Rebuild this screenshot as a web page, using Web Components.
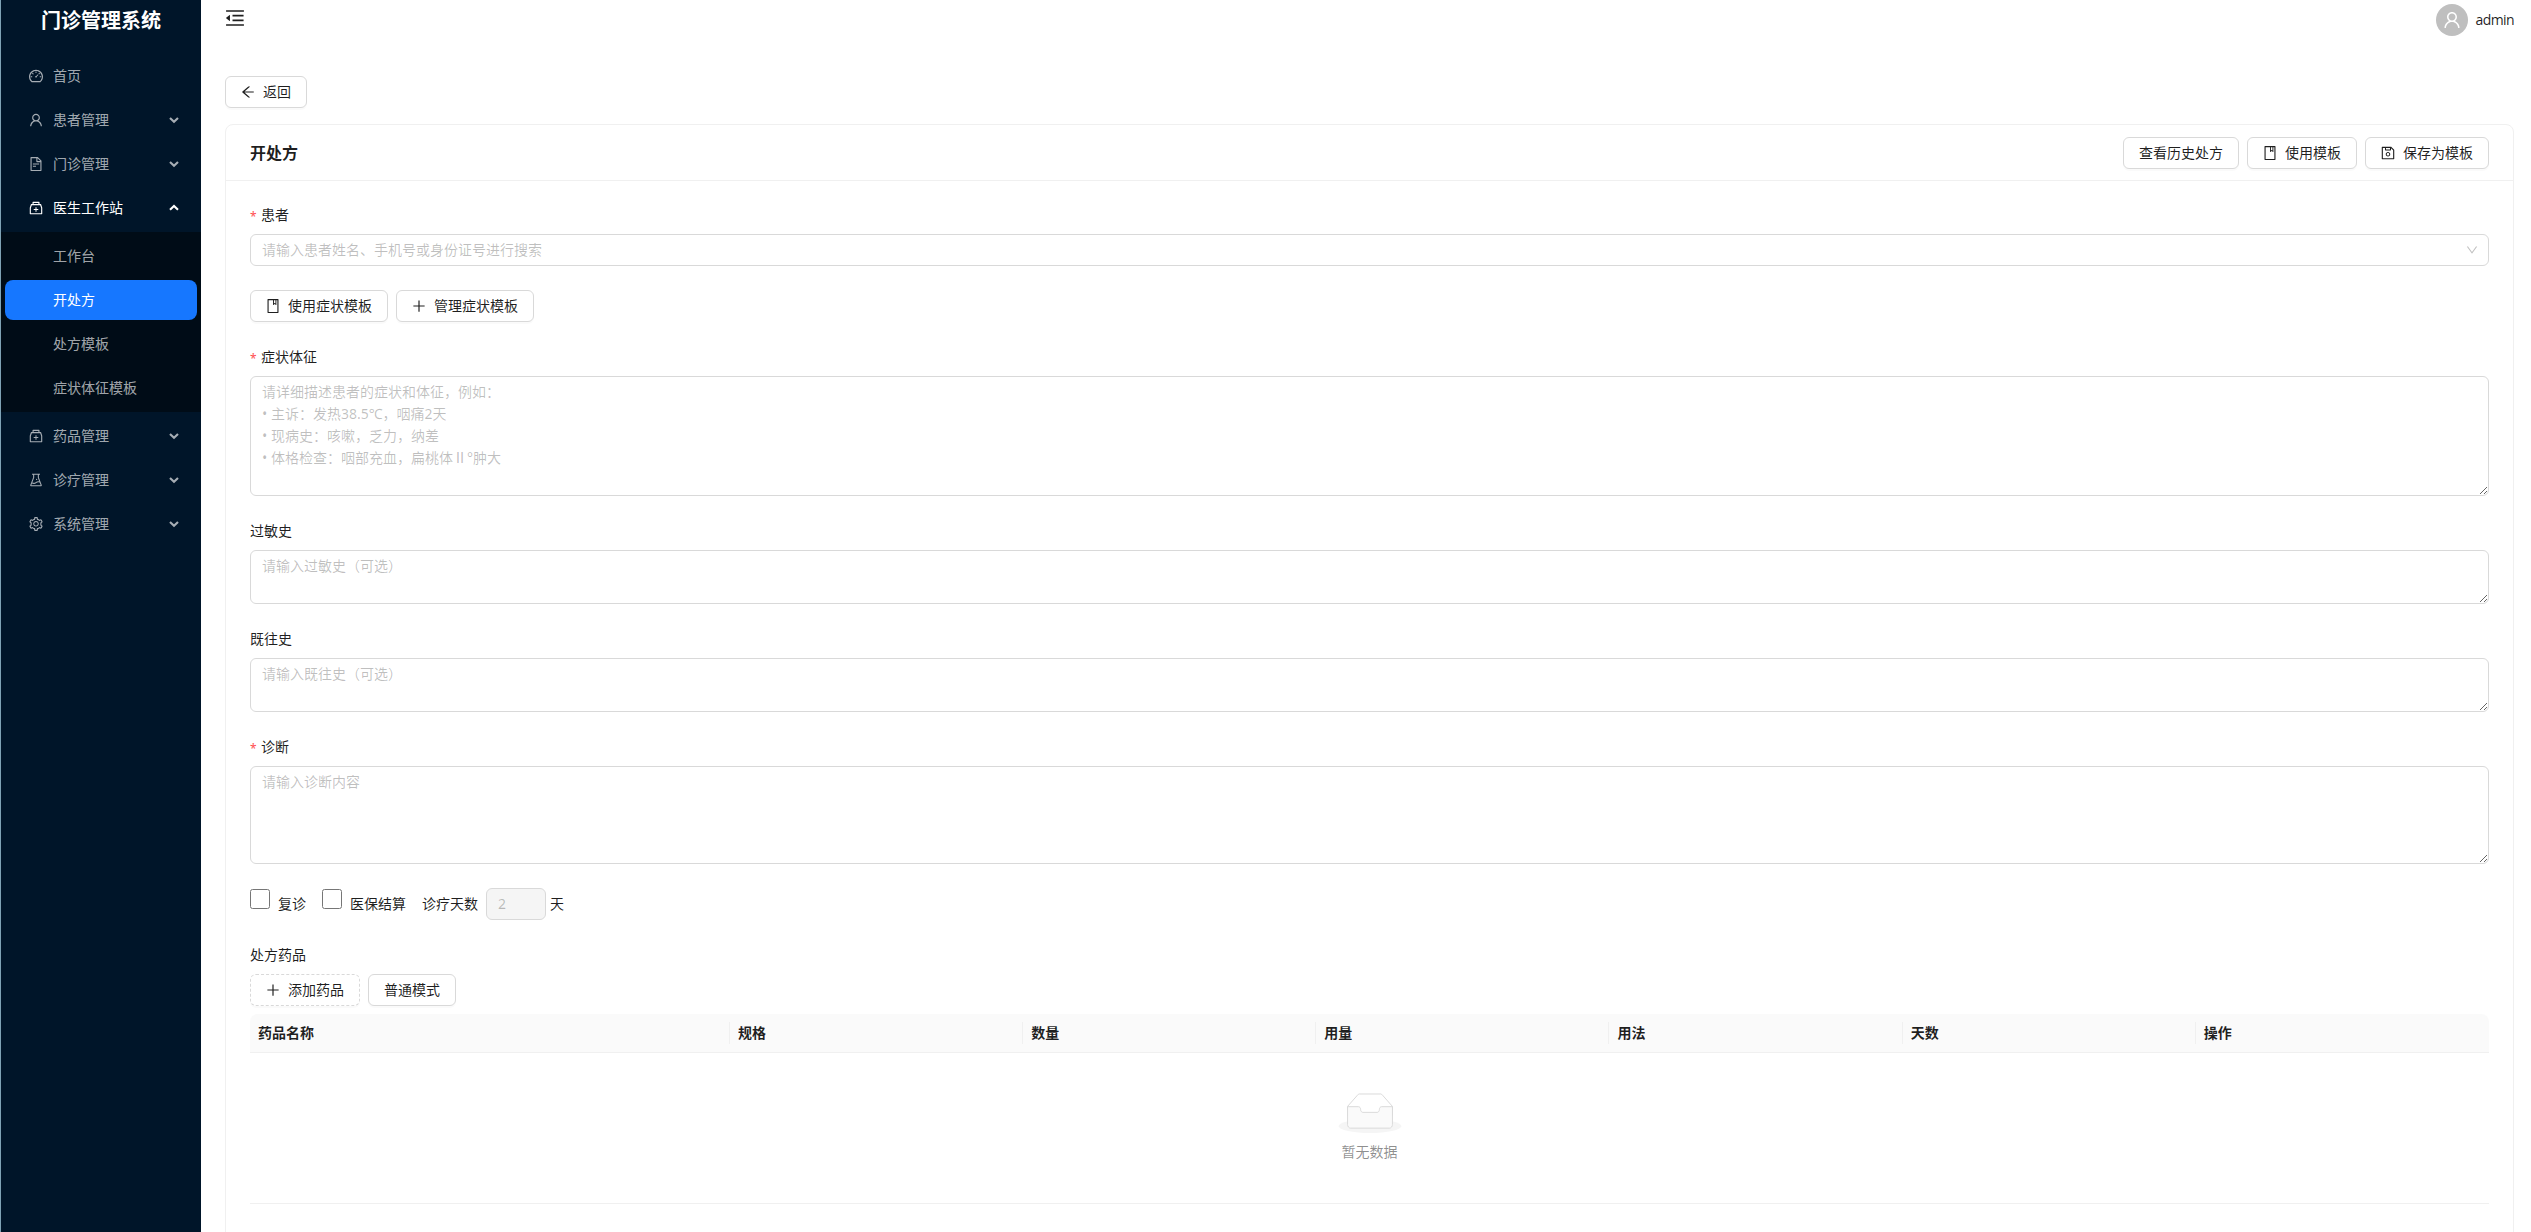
<!DOCTYPE html>
<html lang="zh-CN">
<head>
<meta charset="UTF-8">
<title>门诊管理系统</title>
<style>
    html, body {
        height: 100%;
        margin: 0;
        overflow: hidden;
    }

    body {
        background: #fff;
        color: rgba(0, 0, 0, 0.88);
        font: 14px/22px "Noto Sans", "Noto Sans CJK SC", sans-serif;
    }
</style>
</head>
<body>
<clinic-layout>
    <clinic-sidebar slot="sider" heading="门诊管理系统">
        <clinic-menu-item icon="dashboard">首页</clinic-menu-item>
        <clinic-menu-item icon="user" arrow="down">患者管理</clinic-menu-item>
        <clinic-menu-item icon="file" arrow="down">门诊管理</clinic-menu-item>
        <clinic-menu-item icon="medicine" arrow="up" open>医生工作站</clinic-menu-item>
        <clinic-submenu>
            <clinic-menu-item>工作台</clinic-menu-item>
            <clinic-menu-item selected>开处方</clinic-menu-item>
            <clinic-menu-item>处方模板</clinic-menu-item>
            <clinic-menu-item>症状体征模板</clinic-menu-item>
        </clinic-submenu>
        <clinic-menu-item icon="medicine" arrow="down">药品管理</clinic-menu-item>
        <clinic-menu-item icon="experiment" arrow="down">诊疗管理</clinic-menu-item>
        <clinic-menu-item icon="setting" arrow="down">系统管理</clinic-menu-item>
    </clinic-sidebar>

    <clinic-header slot="header">admin</clinic-header>

    <clinic-button icon="back">返回</clinic-button>

    <clinic-card heading="开处方">
        <clinic-button slot="extra">查看历史处方</clinic-button>
        <clinic-button slot="extra" icon="book">使用模板</clinic-button>
        <clinic-button slot="extra" icon="save">保存为模板</clinic-button>

        <clinic-field label="患者" required>
            <clinic-select>请输入患者姓名、手机号或身份证号进行搜索</clinic-select>
        </clinic-field>
        <clinic-row>
            <clinic-button icon="book">使用症状模板</clinic-button>
            <clinic-button icon="plus">管理症状模板</clinic-button>
        </clinic-row>
        <clinic-field label="症状体征" required>
            <clinic-textarea height="120" placeholder="请详细描述患者的症状和体征，例如：&#10;• 主诉：发热38.5℃，咽痛2天&#10;• 现病史：咳嗽，乏力，纳差&#10;• 体格检查：咽部充血，扁桃体Ⅱ°肿大"></clinic-textarea>
        </clinic-field>
        <clinic-field label="过敏史">
            <clinic-textarea height="54" placeholder="请输入过敏史（可选）"></clinic-textarea>
        </clinic-field>
        <clinic-field label="既往史">
            <clinic-textarea height="54" placeholder="请输入既往史（可选）"></clinic-textarea>
        </clinic-field>
        <clinic-field label="诊断" required>
            <clinic-textarea height="98" placeholder="请输入诊断内容"></clinic-textarea>
        </clinic-field>
        <clinic-visit-options></clinic-visit-options>
        <clinic-field label="处方药品">
            <clinic-row compact>
                <clinic-button icon="plus" dashed>添加药品</clinic-button>
                <clinic-button>普通模式</clinic-button>
            </clinic-row>
            <clinic-table columns="药品名称,规格,数量,用量,用法,天数,操作">暂无数据</clinic-table>
        </clinic-field>
    </clinic-card>
</clinic-layout>

<script>
const ICONS = {
    dashboard: 'M924.8 385.6a446.7 446.7 0 00-96-142.4 446.7 446.7 0 00-142.4-96C631.1 123.8 572.5 112 512 112s-119.1 11.8-174.4 35.2a446.7 446.7 0 00-142.4 96 446.7 446.7 0 00-96 142.4C75.8 440.9 64 499.5 64 560c0 132.7 58.3 257.7 159.9 343.1l1.7 1.4c5.8 4.8 13.1 7.5 20.6 7.5h531.7c7.5 0 14.8-2.7 20.6-7.5l1.7-1.4C901.7 817.7 960 692.7 960 560c0-60.5-11.9-119.1-35.2-174.4zM761.4 836H262.6A371.12 371.12 0 01140 560c0-99.4 38.7-192.8 109-263 70.3-70.3 163.7-109 263-109 99.4 0 192.8 38.7 263 109 70.3 70.3 109 163.7 109 263 0 105.6-44.5 205.5-122.6 276zM623.5 421.5a8.03 8.03 0 00-11.3 0L527.7 506c-18.7-5-39.4-.2-54.1 14.5a55.95 55.95 0 000 79.2 55.95 55.95 0 0079.2 0 55.87 55.87 0 0014.5-54.1l84.5-84.5c3.1-3.1 3.1-8.2 0-11.3l-28.3-28.3zM490 320h44c4.4 0 8-3.6 8-8v-80c0-4.4-3.6-8-8-8h-44c-4.4 0-8 3.6-8 8v80c0 4.4 3.6 8 8 8zm260 218v44c0 4.4 3.6 8 8 8h80c4.4 0 8-3.6 8-8v-44c0-4.4-3.6-8-8-8h-80c-4.4 0-8 3.6-8 8zm12.7-197.2l-31.1-31.1a8.03 8.03 0 00-11.3 0l-56.6 56.6a8.03 8.03 0 000 11.3l31.1 31.1c3.1 3.1 8.2 3.1 11.3 0l56.6-56.6c3.1-3.1 3.1-8.2 0-11.3zm-458.6-31.1a8.03 8.03 0 00-11.3 0l-31.1 31.1a8.03 8.03 0 000 11.3l56.6 56.6c3.1 3.1 8.2 3.1 11.3 0l31.1-31.1c3.1-3.1 3.1-8.2 0-11.3l-56.6-56.6zM262 530h-80c-4.4 0-8 3.6-8 8v44c0 4.4 3.6 8 8 8h80c4.4 0 8-3.6 8-8v-44c0-4.4-3.6-8-8-8z',
    user: 'M858.5 763.6a374 374 0 00-80.6-119.5 375.63 375.63 0 00-119.5-80.6c-.4-.2-.8-.3-1.2-.5C719.5 518 760 444.7 760 362c0-137-111-248-248-248S264 225 264 362c0 82.7 40.5 156 102.8 201.1-.4.2-.8.3-1.2.5-44.8 18.9-85 46-119.5 80.6a375.63 375.63 0 00-80.6 119.5A371.7 371.7 0 00136 901.8a8 8 0 008 8.2h60c4.4 0 7.9-3.5 8-7.8 2-77.2 33-149.5 87.8-204.3 56.7-56.7 132-87.9 212.2-87.9s155.5 31.2 212.2 87.9C779 752.7 810 825 812 902.2c.1 4.4 3.6 7.8 8 7.8h60a8 8 0 008-8.2c-1-47.8-10.9-94.3-29.5-138.2zM512 534c-45.9 0-89.1-17.9-121.6-50.4S340 407.9 340 362c0-45.9 17.9-89.1 50.4-121.6S466.1 190 512 190s89.1 17.9 121.6 50.4S684 316.1 684 362c0 45.9-17.9 89.1-50.4 121.6S557.9 534 512 534z',
    file: 'M854.6 288.6L639.4 73.4c-6-6-14.1-9.4-22.6-9.4H192c-17.7 0-32 14.3-32 32v832c0 17.7 14.3 32 32 32h640c17.7 0 32-14.3 32-32V311.3c0-8.5-3.4-16.7-9.4-22.7zM790.2 326H602V137.8L790.2 326zm1.8 562H232V136h302v216a42 42 0 0042 42h216v494zM504 618H320c-4.4 0-8 3.6-8 8v48c0 4.4 3.6 8 8 8h184c4.4 0 8-3.6 8-8v-48c0-4.4-3.6-8-8-8zM312 490v48c0 4.4 3.6 8 8 8h384c4.4 0 8-3.6 8-8v-48c0-4.4-3.6-8-8-8H320c-4.4 0-8 3.6-8 8z',
    medicine: 'M839.2 278.1a32 32 0 00-30.4-22.1H736V144c0-17.7-14.3-32-32-32H320c-17.7 0-32 14.3-32 32v112h-72.8a31.9 31.9 0 00-30.4 22.1L112 502v378c0 17.7 14.3 32 32 32h736c17.7 0 32-14.3 32-32V502l-72.8-223.9zM360 184h304v72H360v-72zm480 656H184V513.4L244.3 328h535.4L840 513.4V840zM652 572H544V464c0-4.4-3.6-8-8-8h-48c-4.4 0-8 3.6-8 8v108H372c-4.4 0-8 3.6-8 8v48c0 4.4 3.6 8 8 8h108v108c0 4.4 3.6 8 8 8h48c4.4 0 8-3.6 8-8V636h108c4.4 0 8-3.6 8-8v-48c0-4.4-3.6-8-8-8z',
    experiment: 'M512 472a40 40 0 1080 0 40 40 0 10-80 0zm367 352.9L696.3 352V178H768v-68H256v68h71.7v174L145 824.9c-2.8 7.4-4.3 15.2-4.3 23.1 0 35.3 28.7 64 64 64h614.6c7.9 0 15.7-1.5 23.1-4.3 33-12.7 49.4-49.8 36.6-82.8zM395.7 364.7V180h232.6v184.7L719.2 600c-20.7-5.3-42.1-8-63.9-8-61.2 0-119.2 21.5-165.3 60a188.78 188.78 0 01-121.3 43.9c-32.7 0-64.1-8.3-91.8-23.7l118.8-307.5zM210.5 844l41.7-107.8c35.7 18.1 75.4 27.8 116.6 27.8 61.2 0 119.2-21.5 165.3-60 33.9-28.2 76.3-43.9 121.3-43.9 35 0 68.4 9.5 97.6 27.1L813.5 844h-603z',
    setting: 'M924.8 625.7l-65.5-56c3.1-19 4.7-38.4 4.7-57.8s-1.6-38.8-4.7-57.8l65.5-56a32.03 32.03 0 009.3-35.2l-.9-2.6a443.74 443.74 0 00-79.7-137.9l-1.8-2.1a32.12 32.12 0 00-35.1-9.5l-81.3 28.9c-30-24.6-63.5-44-99.7-57.6l-15.7-85a32.05 32.05 0 00-25.8-25.7l-2.7-.5c-52.1-9.4-106.9-9.4-159 0l-2.7.5a32.05 32.05 0 00-25.8 25.7l-15.8 85.4a351.86 351.86 0 00-99 57.4l-81.9-29.1a32 32 0 00-35.1 9.5l-1.8 2.1a446.02 446.02 0 00-79.7 137.9l-.9 2.6c-4.5 12.5-.8 26.5 9.3 35.2l66.3 56.6c-3.1 18.8-4.6 38-4.6 57.1 0 19.2 1.5 38.4 4.6 57.1L99 625.5a32.03 32.03 0 00-9.3 35.2l.9 2.6c18.1 50.4 44.9 96.9 79.7 137.9l1.8 2.1a32.12 32.12 0 0035.1 9.5l81.9-29.1c29.8 24.5 63.1 43.9 99 57.4l15.8 85.4a32.05 32.05 0 0025.8 25.7l2.7.5a449.4 449.4 0 00159 0l2.7-.5a32.05 32.05 0 0025.8-25.7l15.7-85a350 350 0 0099.7-57.6l81.3 28.9a32 32 0 0035.1-9.5l1.8-2.1c34.8-41.1 61.6-87.5 79.7-137.9l.9-2.6c4.5-12.3.8-26.3-9.3-35zM788.3 465.9c2.5 15.1 3.8 30.6 3.8 46.1s-1.3 31-3.8 46.1l-6.6 40.1 74.7 63.9a370.03 370.03 0 01-42.6 73.6L721 702.8l-31.4 25.8c-23.9 19.6-50.5 35-79.3 45.8l-38.1 14.3-17.9 97a377.5 377.5 0 01-85 0l-17.9-97.2-37.8-14.5c-28.5-10.8-55-26.2-78.7-45.7l-31.4-25.9-93.4 33.2c-17-22.9-31.2-47.6-42.6-73.6l75.5-64.5-6.5-40c-2.4-14.9-3.7-30.3-3.7-45.5 0-15.3 1.2-30.6 3.7-45.5l6.5-40-75.5-64.5c11.3-26.1 25.6-50.7 42.6-73.6l93.4 33.2 31.4-25.9c23.7-19.5 50.2-34.9 78.7-45.7l37.9-14.3 17.9-97.2c28.1-3.2 56.8-3.2 85 0l17.9 97 38.1 14.3c28.7 10.8 55.4 26.2 79.3 45.8l31.4 25.8 92.8-32.9c17 22.9 31.2 47.6 42.6 73.6L781.8 426l6.5 39.9zM512 326c-97.2 0-176 78.8-176 176s78.8 176 176 176 176-78.8 176-176-78.8-176-176-176zm79.2 255.2A111.6 111.6 0 01512 614c-29.9 0-58-11.7-79.2-32.8A111.6 111.6 0 01400 502c0-29.9 11.7-58 32.8-79.2C454 401.6 482.1 390 512 390c29.9 0 58 11.6 79.2 32.8A111.6 111.6 0 01624 502c0 29.9-11.7 58-32.8 79.2z',
    back: 'M872 474H286.9l350.2-304c5.6-4.9 2.2-14-5.2-14h-88.5c-3.9 0-7.6 1.4-10.5 3.9L155 487.8a31.96 31.96 0 000 48.3L535.1 866c1.5 1.3 3.3 2 5.2 2h91.5c7.4 0 10.8-9.2 5.2-14L286.9 550H872c4.4 0 8-3.6 8-8v-60c0-4.4-3.6-8-8-8z',
    plus: 'M482 152h60q8 0 8 8v704q0 8-8 8h-60q-8 0-8-8V160q0-8 8-8zM192 474h672q8 0 8 8v60q0 8-8 8H160q-8 0-8-8v-60q0-8 8-8z',
    book: 'M832 64H192c-17.7 0-32 14.3-32 32v832c0 17.7 14.3 32 32 32h640c17.7 0 32-14.3 32-32V96c0-17.7-14.3-32-32-32zm-260 72h96v209.9L621.5 312 572 347.4V136zm220 752H232V136h280v296.9c0 3.3 1 6.6 3 9.3a15.9 15.9 0 0022.3 3.7l83.8-59.9 81.4 59.4c2.7 2 6 3.1 9.4 3.1 8.8 0 16-7.2 16-16V136h64v752z',
    save: 'M893.3 293.3L730.7 130.7c-7.5-7.5-16.7-13-26.7-16V112H144c-17.7 0-32 14.3-32 32v736c0 17.7 14.3 32 32 32h736c17.7 0 32-14.3 32-32V338.5c0-17-6.7-33.2-18.7-45.2zM384 184h256v104H384V184zm456 656H184V184h136v136c0 17.7 14.3 32 32 32h320c17.7 0 32-14.3 32-32V205.8l136 136V840zM512 442c-79.5 0-144 64.5-144 144s64.5 144 144 144 144-64.5 144-144-64.5-144-144-144zm0 224c-44.2 0-80-35.8-80-80s35.8-80 80-80 80 35.8 80 80-35.8 80-80 80z',
    down: 'M884 256h-75c-5.1 0-9.9 2.5-12.9 6.6L512 654.2 227.9 262.6c-3-4.1-7.8-6.6-12.9-6.6h-75c-6.5 0-10.3 7.4-6.5 12.7l352.6 486.1c12.8 17.6 39 17.6 51.7 0l352.6-486.1c3.9-5.3.1-12.7-6.4-12.7z',
    fold: 'M408 442h480c4.4 0 8-3.6 8-8v-56c0-4.4-3.6-8-8-8H408c-4.4 0-8 3.6-8 8v56c0 4.4 3.6 8 8 8zm-8 204c0 4.4 3.6 8 8 8h480c4.4 0 8-3.6 8-8v-56c0-4.4-3.6-8-8-8H408c-4.4 0-8 3.6-8 8v56zm504-486H120c-4.4 0-8 3.6-8 8v56c0 4.4 3.6 8 8 8h784c4.4 0 8-3.6 8-8v-56c0-4.4-3.6-8-8-8zm0 632H120c-4.4 0-8 3.6-8 8v56c0 4.4 3.6 8 8 8h784c4.4 0 8-3.6 8-8v-56c0-4.4-3.6-8-8-8zM115.4 518.9L271.7 642c5.8 4.6 14.4.5 14.4-6.9V388.9c0-7.4-8.5-11.5-14.4-6.9L115.4 505.1a8.74 8.74 0 000 13.8z'
};

// Shared base: renders the template once into an open shadow root
class ClinicElement extends HTMLElement {
    connectedCallback() {
        if (this.shadowRoot) return;
        this.attachShadow({ mode: 'open' });
        this.shadowRoot.innerHTML = this.template();
    }

    template() {
        return '<slot></slot>';
    }
}

class ClinicIcon extends ClinicElement {
    template() {
        return `
            <style>
                :host { display: block; flex: none; width: 1em; height: 1em; line-height: 0; }
                svg { display: block; width: 100%; height: 100%; fill: currentColor; }
            </style>
            <svg viewBox="64 64 896 896"><path d="${ICONS[this.getAttribute('name')]}"/></svg>
        `;
    }
}

class ClinicLayout extends ClinicElement {
    template() {
        return `
            <style>
                :host {
                    display: flex;
                    height: 100vh;
                    border-left: 1px solid #7fa3b5;
                    box-sizing: border-box;
                    overflow: hidden;
                }
                .main {
                    flex: 1;
                    min-width: 0;
                    padding: 0 17px 0 24px;
                }
                .content {
                    display: flex;
                    flex-direction: column;
                    align-items: flex-start;
                    gap: 16px;
                    padding-top: 36px;
                }
            </style>
            <slot name="sider"></slot>
            <div class="main">
                <slot name="header"></slot>
                <div class="content"><slot></slot></div>
            </div>
        `;
    }
}

class ClinicSidebar extends ClinicElement {
    template() {
        return `
            <style>
                :host { display: block; flex: none; width: 200px; background: #001529; }
                h1 {
                    margin: 0 0 10px;
                    color: #fff;
                    font-size: 20px;
                    font-weight: 700;
                    line-height: 42px;
                    text-align: center;
                }
                nav { display: flex; flex-direction: column; }
            </style>
            <h1>${this.getAttribute('heading')}</h1>
            <nav><slot></slot></nav>
        `;
    }
}

class ClinicSubmenu extends ClinicElement {
    template() {
        return `
            <style>
                :host { display: flow-root; background: #000c17; }
                div { display: flex; flex-direction: column; }
            </style>
            <div><slot></slot></div>
        `;
    }
}

class ClinicMenuItem extends ClinicElement {
    template() {
        const icon = this.getAttribute('icon');
        const arrow = this.getAttribute('arrow');
        const points = arrow === 'up' ? '1,6.8 5,2.9 9,6.8' : '1,2.9 5,6.8 9,2.9';

        return `
            <style>
                :host {
                    display: flex;
                    align-items: center;
                    gap: 10px;
                    height: 40px;
                    margin: 4px 4px 0;
                    padding: 0 18px 0 24px;
                    border-radius: 8px;
                    color: rgba(255, 255, 255, 0.65);
                    line-height: 40px;
                }
                :host(:last-child) { margin-bottom: 4px; }
                :host(:not([icon])) { padding-left: 48px; }
                :host([open]) { color: #fff; margin-bottom: 4px; }
                :host([selected]) { color: #fff; background: #1677ff; }
                span { flex: 1; }
                svg { width: 10px; height: 10px; fill: none; stroke: currentColor; stroke-width: 2.1; }
            </style>
            ${icon ? `<clinic-icon name="${icon}"></clinic-icon>` : ''}
            <span><slot></slot></span>
            ${arrow ? `<svg viewBox="0 0 10 10"><polyline points="${points}"/></svg>` : ''}
        `;
    }
}

class ClinicHeader extends ClinicElement {
    template() {
        return `
            <style>
                :host { display: flex; align-items: center; justify-content: space-between; height: 40px; }
                .fold { font-size: 20px; margin-bottom: 4px; }
                .user { display: flex; align-items: center; gap: 8px; }
                .name { font-family: "Open Sans", "Noto Sans CJK SC", sans-serif; letter-spacing: -0.6px; }
                .avatar {
                    display: flex;
                    align-items: center;
                    justify-content: center;
                    width: 32px;
                    height: 32px;
                    border-radius: 50%;
                    background: #bfbfbf;
                    color: #fff;
                    font-size: 18px;
                }
            </style>
            <clinic-icon class="fold" name="fold"></clinic-icon>
            <div class="user">
                <div class="avatar"><clinic-icon name="user"></clinic-icon></div>
                <span class="name"><slot></slot></span>
            </div>
        `;
    }
}

class ClinicButton extends ClinicElement {
    template() {
        const icon = this.getAttribute('icon');

        return `
            <style>
                :host { display: block; flex: none; }
                button {
                    display: flex;
                    align-items: center;
                    gap: 8px;
                    height: 32px;
                    margin: 0;
                    padding: 0 15px;
                    border: 1px solid #d9d9d9;
                    border-radius: 6px;
                    background: #fff;
                    box-shadow: 0 2px 0 rgba(0, 0, 0, 0.02);
                    color: inherit;
                    font: inherit;
                }
                :host([dashed]) button { border-style: dashed; }
            </style>
            <button type="button">
                ${icon ? `<clinic-icon name="${icon}"></clinic-icon>` : ''}
                <span><slot></slot></span>
            </button>
        `;
    }
}

class ClinicCard extends ClinicElement {
    template() {
        return `
            <style>
                :host {
                    display: block;
                    align-self: stretch;
                    height: 1400px;
                    border: 1px solid #f0f0f0;
                    border-radius: 8px;
                    background: #fff;
                }
                header {
                    display: flex;
                    align-items: center;
                    justify-content: space-between;
                    box-sizing: border-box;
                    height: 56px;
                    padding: 0 24px;
                    border-bottom: 1px solid #f0f0f0;
                }
                h2 { margin: 0; font-size: 16px; font-weight: 600; line-height: 24px; }
                .extra { display: flex; gap: 8px; }
                .body {
                    display: flex;
                    flex-direction: column;
                    gap: 24px;
                    padding: 23px 24px 24px;
                }
            </style>
            <header>
                <h2>${this.getAttribute('heading')}</h2>
                <div class="extra"><slot name="extra"></slot></div>
            </header>
            <div class="body"><slot></slot></div>
        `;
    }
}

class ClinicRow extends ClinicElement {
    template() {
        return `
            <style>
                :host { display: flex; gap: 8px; }
                :host([compact]) { margin-bottom: 8px; }
            </style>
            <slot></slot>
        `;
    }
}

class ClinicField extends ClinicElement {
    template() {
        const mark = this.hasAttribute('required') ? '<i>*</i>' : '';

        return `
            <style>
                :host { display: block; }
                label { display: flex; align-items: center; height: 22px; margin-bottom: 8px; }
                i {
                    width: 7px;
                    margin-right: 4px;
                    padding-top: 3px;
                    color: #ff4d4f;
                    font-size: 12px;
                    font-style: normal;
                    line-height: 14px;
                }
            </style>
            <label>${mark}${this.getAttribute('label')}</label>
            <slot></slot>
        `;
    }
}

class ClinicSelect extends ClinicElement {
    template() {
        return `
            <style>
                :host {
                    display: flex;
                    align-items: center;
                    justify-content: space-between;
                    box-sizing: border-box;
                    height: 32px;
                    padding: 0 10px 0 11px;
                    border: 1px solid #d9d9d9;
                    border-radius: 6px;
                    color: rgba(0, 0, 0, 0.25);
                }
                clinic-icon { font-size: 12px; }
            </style>
            <span><slot></slot></span>
            <clinic-icon name="down"></clinic-icon>
        `;
    }
}

class ClinicTextarea extends ClinicElement {
    template() {
        return `
            <style>
                :host { display: block; }
                textarea {
                    display: block;
                    box-sizing: border-box;
                    width: 100%;
                    height: ${this.getAttribute('height')}px;
                    margin: 0;
                    padding: 4px 11px;
                    border: 1px solid #d9d9d9;
                    border-radius: 6px;
                    background: #fff;
                    color: inherit;
                    font: inherit;
                    resize: vertical;
                }
                textarea::placeholder { color: rgba(0, 0, 0, 0.25); }
            </style>
            <textarea placeholder="${this.getAttribute('placeholder')}"></textarea>
        `;
    }
}

class ClinicVisitOptions extends ClinicElement {
    template() {
        return `
            <style>
                :host { display: flex; height: 32px; line-height: 32px; }
                label { display: flex; gap: 8px; margin-right: 16px; }
                input[type=checkbox] { width: 20px; height: 20px; margin: 1px 0 0; }
                input[type=text] {
                    box-sizing: border-box;
                    width: 60px;
                    height: 32px;
                    margin-right: 4px;
                    padding: 0 11px;
                    border: 1px solid #d9d9d9;
                    border-radius: 6px;
                    background: rgba(0, 0, 0, 0.04);
                    color: rgba(0, 0, 0, 0.25);
                    font: inherit;
                }
                .days { margin-right: 0; }
            </style>
            <label><input type="checkbox">复诊</label>
            <label><input type="checkbox">医保结算</label>
            <label class="days">诊疗天数 <input type="text" value="2" disabled></label>
            <span>天</span>
        `;
    }
}

class ClinicTable extends ClinicElement {
    template() {
        const columns = this.getAttribute('columns').split(',');

        return `
            <style>
                :host { display: block; }
                .head {
                    display: grid;
                    grid-template-columns: 480px repeat(${columns.length - 1}, 1fr);
                    padding: 8px 0;
                    border-bottom: 1px solid #f0f0f0;
                    border-radius: 8px 8px 0 0;
                    background: #fafafa;
                    font-weight: 600;
                }
                .head span { padding-left: 8px; border-right: 1px solid #f0f0f0; }
                .head span:last-child { border-right: 0; }
                .empty {
                    display: flex;
                    flex-direction: column;
                    align-items: center;
                    gap: 8px;
                    padding: 40px 0;
                    border-bottom: 1px solid #f0f0f0;
                    color: rgba(0, 0, 0, 0.45);
                }
                svg { display: block; height: 40px; }
            </style>
            <div class="head">${columns.map(name => `<span>${name}</span>`).join('')}</div>
            <div class="empty">
                <svg viewBox="0 0 64 41" width="64">
                    <g transform="translate(0 1)" fill="none" fill-rule="evenodd">
                        <ellipse fill="#f5f5f5" cx="32" cy="33" rx="32" ry="7"/>
                        <g fill-rule="nonzero" stroke="#d9d9d9">
                            <path d="M55 12.76L44.854 1.258C44.367.474 43.656 0 42.907 0H21.093c-.749 0-1.46.474-1.947 1.257L9 12.761V22h46v-9.24z"/>
                            <path d="M41.613 15.931c0-1.605.994-2.93 2.227-2.931H55v18.137C55 33.26 53.68 35 52.05 35h-40.1C10.32 35 9 33.259 9 31.137V13h11.16c1.233 0 2.227 1.323 2.227 2.928v.022c0 1.605 1.005 2.901 2.237 2.901h14.752c1.232 0 2.237-1.308 2.237-2.913v-.007z" fill="#fafafa"/>
                        </g>
                    </g>
                </svg>
                <slot></slot>
            </div>
        `;
    }
}

// Register the components
customElements.define('clinic-icon', ClinicIcon);
customElements.define('clinic-layout', ClinicLayout);
customElements.define('clinic-sidebar', ClinicSidebar);
customElements.define('clinic-submenu', ClinicSubmenu);
customElements.define('clinic-menu-item', ClinicMenuItem);
customElements.define('clinic-header', ClinicHeader);
customElements.define('clinic-button', ClinicButton);
customElements.define('clinic-card', ClinicCard);
customElements.define('clinic-row', ClinicRow);
customElements.define('clinic-field', ClinicField);
customElements.define('clinic-select', ClinicSelect);
customElements.define('clinic-textarea', ClinicTextarea);
customElements.define('clinic-visit-options', ClinicVisitOptions);
customElements.define('clinic-table', ClinicTable);
</script>
</body>
</html>
